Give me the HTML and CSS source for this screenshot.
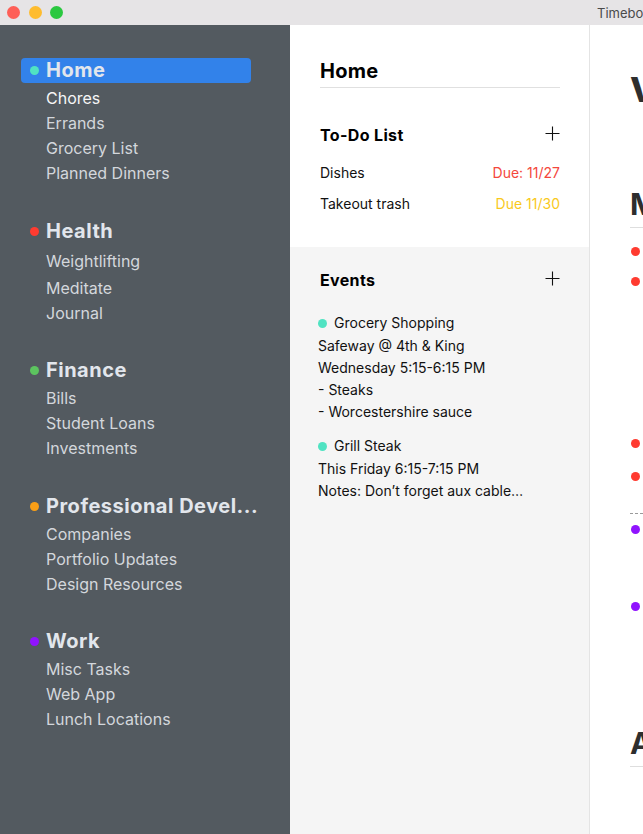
FILE: index.html
```html
<!DOCTYPE html>
<html lang="en">
<head>
<meta charset="utf-8">
<title>Timeboxing</title>
<link rel="stylesheet" href="styles.css">
</head>
<body>
<div class="window">
  <header class="titlebar">
    <div class="lights">
      <span class="light red"></span>
      <span class="light yellow"></span>
      <span class="light green"></span>
    </div>
    <div class="title">Timeboxing</div>
  </header>

  <div class="app">
    <nav class="sidebar">
      <section class="group">
        <div class="group-head selected"><span class="dot teal"></span><span class="group-name">Home</span></div>
        <ul class="items">
          <li class="item active">Chores</li>
          <li class="item">Errands</li>
          <li class="item">Grocery List</li>
          <li class="item">Planned Dinners</li>
        </ul>
      </section>
      <section class="group">
        <div class="group-head"><span class="dot red"></span><span class="group-name">Health</span></div>
        <ul class="items loose">
          <li class="item">Weightlifting</li>
          <li class="item tall">Meditate</li>
          <li class="item">Journal</li>
        </ul>
      </section>
      <section class="group">
        <div class="group-head"><span class="dot green"></span><span class="group-name">Finance</span></div>
        <ul class="items">
          <li class="item">Bills</li>
          <li class="item">Student Loans</li>
          <li class="item">Investments</li>
        </ul>
      </section>
      <section class="group">
        <div class="group-head"><span class="dot orange"></span><span class="group-name">Professional Devel...</span></div>
        <ul class="items">
          <li class="item">Companies</li>
          <li class="item">Portfolio Updates</li>
          <li class="item">Design Resources</li>
        </ul>
      </section>
      <section class="group">
        <div class="group-head"><span class="dot purple"></span><span class="group-name">Work</span></div>
        <ul class="items">
          <li class="item">Misc Tasks</li>
          <li class="item">Web App</li>
          <li class="item">Lunch Locations</li>
        </ul>
      </section>
    </nav>

    <main class="middle">
      <section class="todo-sec">
        <h1 class="page-title">Home</h1>
        <div class="sec-head">
          <h2 class="sec-title">To-Do List</h2>
          <svg class="plus" width="15" height="15" viewBox="0 0 15 15" aria-hidden="true"><path d="M7.5 0.5V14.5M0.5 7.5H14.5" stroke="#111" stroke-width="1.1" fill="none"/></svg>
        </div>
        <div class="todo-row"><span>Dishes</span><span class="due overdue">Due: 11/27</span></div>
        <div class="todo-row"><span>Takeout trash</span><span class="due soon">Due 11/30</span></div>
      </section>

      <section class="events-sec">
        <div class="sec-head first">
          <h2 class="sec-title">Events</h2>
          <svg class="plus" width="15" height="15" viewBox="0 0 15 15" aria-hidden="true"><path d="M7.5 0.5V14.5M0.5 7.5H14.5" stroke="#111" stroke-width="1.1" fill="none"/></svg>
        </div>
        <div class="event">
          <div class="event-title"><span class="dot teal"></span>Grocery Shopping</div>
          <div class="event-line">Safeway @ 4th &amp; King</div>
          <div class="event-line">Wednesday 5:15-6:15 PM</div>
          <div class="event-line">- Steaks</div>
          <div class="event-line">- Worcestershire sauce</div>
        </div>
        <div class="event">
          <div class="event-title"><span class="dot teal"></span>Grill Steak</div>
          <div class="event-line">This Friday 6:15-7:15 PM</div>
          <div class="event-line">Notes: Don’t forget aux cable…</div>
        </div>
      </section>
    </main>

    <section class="right">
      <h1 class="right-title">Views</h1>
      <h2 class="day-head">Monday</h2>
      <div class="slots">
        <div class="slot"><span class="dot red"></span><div class="slot-body"><div class="slot-title">Morning workout</div></div></div>
        <div class="slot"><span class="dot red"></span><div class="slot-body">
          <div class="slot-title">Weightlifting</div>
          <div class="slot-line">Squats 5x5</div>
          <div class="slot-line">Bench press 5x5</div>
          <div class="slot-line">Rows 5x5</div>
          <div class="slot-line">Deadlift 1x5</div>
          <div class="slot-line">Stretch</div>
          <div class="slot-line">Cool down</div>
        </div></div>
        <div class="slot gap-after"><span class="dot red"></span><div class="slot-body"><div class="slot-title">Meditate</div></div></div>
        <div class="slot"><span class="dot red"></span><div class="slot-body"><div class="slot-title">Journal</div></div></div>
        <div class="slot now gap-after"><span class="dot purple"></span><div class="slot-body">
          <div class="slot-title">Web App</div>
          <div class="slot-line">Fix login bug</div>
          <div class="slot-line">Review PRs</div>
        </div></div>
        <div class="slot"><span class="dot purple"></span><div class="slot-body">
          <div class="slot-title">Misc Tasks</div>
          <div class="slot-line">Reply to emails</div>
          <div class="slot-line">Update tickets</div>
        </div></div>
      </div>
      <h2 class="day-head later">After Work</h2>
    </section>
  </div>
</div>
</body>
</html>
```

FILE: styles.css
```css
* {
  box-sizing: border-box;
  margin: 0;
  padding: 0;
}

html,
body {
  width: 643px;
  height: 834px;
  overflow: hidden;
}

body {
  font-family: Inter, "Noto Sans", "Liberation Sans", sans-serif;
  background: #ffffff;
  color: #111111;
}

.window {
  display: flex;
  flex-direction: column;
  height: 834px;
}

/* Title bar */
.titlebar {
  height: 25px;
  flex: none;
  background: #e6e4e6;
  display: flex;
  align-items: center;
  padding-left: 7px;
  overflow: hidden;
}

.lights {
  display: flex;
  gap: 8.5px;
}

.light {
  width: 13px;
  height: 13px;
  border-radius: 50%;
}

.light.red { background: #fe5f57; }
.light.yellow { background: #febc2e; }
.light.green { background: #2bc840; }

.title {
  margin-left: auto;
  width: 46px;
  flex: none;
  overflow: hidden;
  white-space: nowrap;
  font-size: 13px;
  color: #4a4a4a;
}

/* Layout */
.app {
  flex: 1;
  display: flex;
  min-height: 0;
}

/* Sidebar */
.sidebar {
  width: 290px;
  flex: none;
  background: #535a60;
  padding: 33px 39px 0 21px;
  display: flex;
  flex-direction: column;
  gap: 32.5px;
}

.group-head {
  height: 25px;
  display: flex;
  align-items: center;
  padding-left: 9px;
  border-radius: 4px;
  white-space: nowrap;
}

.group-head.selected {
  background: #3282ea;
}

.dot {
  width: 9px;
  height: 9px;
  border-radius: 50%;
  flex: none;
  margin-right: 7px;
}

.dot.teal { background: #50e3c2; }
.dot.red { background: #ff3b30; }
.dot.green { background: #5cc45f; }
.dot.orange { background: #fb9f16; }
.dot.purple { background: #9013fe; }

.group-name {
  font-size: 20px;
  font-weight: 700;
  line-height: 25px;
  letter-spacing: 0.5px;
  color: #e2e6ec;
}

.items {
  list-style: none;
  margin-top: 3px;
  padding-left: 25px;
}

.items.loose {
  margin-top: 5px;
}

.item {
  height: 25px;
  line-height: 25px;
  font-size: 16px;
  color: #d3d7dc;
  white-space: nowrap;
}

.item.tall {
  height: 27px;
  line-height: 29px;
}

.item.active {
  color: #f6f6f6;
}

/* Middle column */
.middle {
  width: 300px;
  flex: none;
  display: flex;
  flex-direction: column;
  border-right: 1px solid #e4e4e4;
}

.todo-sec {
  background: #ffffff;
  padding: 34px 29px 28px 30px;
}

.page-title {
  font-size: 20px;
  font-weight: 700;
  line-height: 24px;
  letter-spacing: 0.3px;
  padding-bottom: 4px;
  border-bottom: 1px solid #e0e0e0;
  color: #000000;
}

.sec-head {
  display: flex;
  justify-content: space-between;
  align-items: center;
  height: 24px;
  margin-top: 35px;
  margin-bottom: 10px;
}

.sec-head.first {
  margin-top: 0;
  margin-bottom: 20px;
}

.sec-title {
  font-size: 16px;
  font-weight: 700;
  letter-spacing: 0.35px;
  color: #000000;
}

.plus {
  display: block;
  margin-top: -3px;
}

.todo-row {
  display: flex;
  justify-content: space-between;
  font-size: 14px;
  line-height: 31px;
  color: #111111;
}

.due.overdue { color: #f4473c; }
.due.soon { color: #f9c91c; }

.events-sec {
  flex: 1;
  background: #f5f5f5;
  padding: 21px 29px 0 30px;
}

.event {
  margin-left: -2px;
  font-size: 14px;
  line-height: 22px;
  color: #111111;
  white-space: nowrap;
}

.event + .event {
  margin-top: 12px;
}

.event-title {
  display: flex;
  align-items: center;
  margin-bottom: 1px;
}

/* Right column */
.right {
  flex: 1;
  min-width: 0;
  padding-left: 40px;
  overflow: hidden;
  white-space: nowrap;
  background: #ffffff;
}

.right-title {
  margin-top: 45px;
  font-size: 34px;
  font-weight: 800;
  line-height: 40px;
  color: #2e2e2e;
}

.day-head {
  margin-top: 76px;
  font-size: 30px;
  font-weight: 700;
  line-height: 36px;
  padding-bottom: 5px;
  border-bottom: 1px solid #dedede;
  color: #2e2e2e;
}

.day-head.later {
  margin-top: 60px;
}

.slots {
  margin-top: 8px;
}

.slot {
  display: flex;
  align-items: flex-start;
  font-size: 14px;
}

.slot.gap-after {
  padding-bottom: 3px;
}

.slot .dot {
  margin-top: 10.5px;
  margin-left: 1px;
}

.slot-title {
  line-height: 30px;
}

.slot-line {
  line-height: 22px;
}

.slot.now {
  margin-top: 22px;
  border-top: 1px dashed #9a9a9a;
}
```
